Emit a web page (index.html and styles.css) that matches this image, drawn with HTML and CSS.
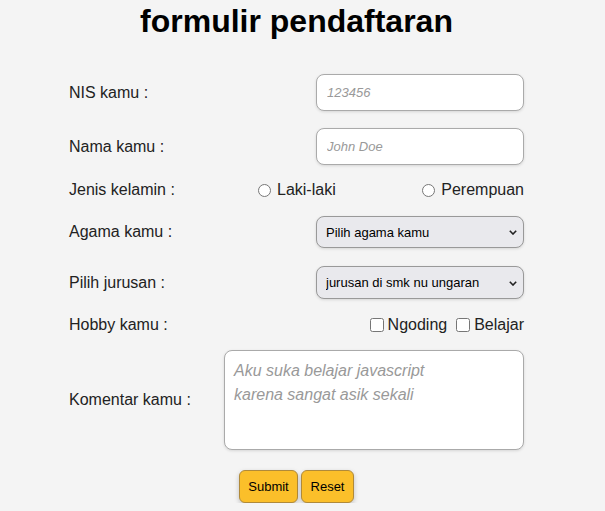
FILE: index.html
```html
<!DOCTYPE html>
<html lang="id">
<head>
<meta charset="utf-8">
<title>formulir pendaftaran</title>
<link rel="stylesheet" href="styles.css">
</head>
<body>
<div class="page">
  <h1 class="title">formulir pendaftaran</h1>
  <form class="form">
    <div class="row row-input">
      <label class="lbl" for="nis">NIS kamu :</label>
      <input class="field" id="nis" type="text" placeholder="123456">
    </div>
    <div class="row row-input row-nama">
      <label class="lbl" for="nama">Nama kamu :</label>
      <input class="field" id="nama" type="text" placeholder="John Doe">
    </div>
    <div class="row row-radio">
      <span class="lbl">Jenis kelamin :</span>
      <div class="radios">
        <label class="opt"><input class="radio" type="radio" name="jk"> Laki-laki</label>
        <label class="opt"><input class="radio" type="radio" name="jk"> Perempuan</label>
      </div>
    </div>
    <div class="row row-select">
      <label class="lbl" for="agama">Agama kamu :</label>
      <div class="sel-wrap">
        <select class="sel" id="agama">
          <option>Pilih agama kamu</option>
        </select>
        <svg class="chev" width="8" height="5" viewBox="0 0 8 5"><path d="M0.8 0.8 L4 4 L7.2 0.8" fill="none" stroke="#222" stroke-width="1.6"/></svg>
      </div>
    </div>
    <div class="row row-select2">
      <label class="lbl" for="jurusan">Pilih jurusan :</label>
      <div class="sel-wrap sel-wrap2">
        <select class="sel" id="jurusan">
          <option>jurusan di smk nu ungaran</option>
        </select>
        <svg class="chev" width="8" height="5" viewBox="0 0 8 5"><path d="M0.8 0.8 L4 4 L7.2 0.8" fill="none" stroke="#222" stroke-width="1.6"/></svg>
      </div>
    </div>
    <div class="row row-check">
      <span class="lbl">Hobby kamu :</span>
      <div class="checks">
        <label class="opt"><input class="check" type="checkbox"> Ngoding</label>
        <label class="opt"><input class="check" type="checkbox"> Belajar</label>
      </div>
    </div>
    <div class="row row-area">
      <label class="lbl" for="komentar">Komentar kamu :</label>
      <textarea class="area" id="komentar" placeholder="Aku suka belajar javascript
karena sangat asik sekali"></textarea>
    </div>
    <div class="buttons">
      <button class="btn btn-submit" type="submit">Submit</button>
      <button class="btn btn-reset" type="reset">Reset</button>
    </div>
  </form>
</div>
</body>
</html>
```
FILE: styles.css
```css
html, body {
  margin: 0;
  padding: 0;
  background: #f4f4f4;
}
body {
  font-family: "Liberation Sans", Arial, sans-serif;
  color: #222;
}
.page {
  width: 455px;
  margin-left: 69px;
  padding-top: 3px;
}
.title {
  margin: 0;
  font-size: 32px;
  font-weight: bold;
  color: #000;
  text-align: center;
  line-height: 37px;
}
.form {
  display: flex;
  flex-direction: column;
  margin-top: 34px;
}
.row {
  display: grid;
  grid-template-columns: 155px 300px;
  align-items: center;
}
.row-nama { margin-top: 17px; }
.row-radio { margin-top: 14px; height: 22px; }
.row-select { margin-top: 15px; }
.row-select2 { margin-top: 18px; }
.row-check { margin-top: 15px; height: 21px; }
.row-area { margin-top: 15px; }
.lbl {
  font-size: 16px;
  color: #222;
}
.field {
  justify-self: end;
  box-sizing: border-box;
  width: 208px;
  height: 37px;
  margin: 0;
  padding: 0 10px;
  border: 1px solid #aaa;
  border-radius: 8px;
  background: #fff;
  box-shadow: 0 1px 3px rgba(0,0,0,0.12);
  font-family: "Liberation Sans", Arial, sans-serif;
  font-size: 13px;
  outline: none;
}
.field::placeholder,
.area::placeholder {
  color: #999;
  font-style: italic;
}
.radios {
  display: flex;
  justify-content: space-between;
  padding-left: 34px;
}
.opt {
  display: inline-flex;
  align-items: center;
  font-size: 16px;
  color: #222;
}
.radio {
  margin: 0 6px 0 0;
  width: 13px;
  height: 13px;
}
.sel-wrap {
  justify-self: end;
  position: relative;
  width: 208px;
  height: 32px;
}
.sel-wrap2 { height: 33px; }
.sel {
  appearance: none;
  -webkit-appearance: none;
  box-sizing: border-box;
  width: 100%;
  height: 100%;
  margin: 0;
  padding: 0 20px 0 9px;
  border: 1px solid #999;
  border-radius: 8px;
  background-color: #e9e9ed;
  box-shadow: 0 1px 3px rgba(0,0,0,0.12);
  font-family: "Liberation Sans", Arial, sans-serif;
  font-size: 13px;
  color: #000;
}
.chev {
  position: absolute;
  right: 7px;
  top: 50%;
  margin-top: -2px;
  pointer-events: none;
}
.checks {
  display: flex;
  justify-content: flex-end;
  gap: 9px;
}
.check {
  margin: 0 4px 0 0;
  width: 14px;
  height: 14px;
}
.area {
  box-sizing: border-box;
  width: 300px;
  height: 100px;
  margin: 0;
  padding: 8px 9px;
  border: 1px solid #aaa;
  border-radius: 8px;
  background: #fff;
  box-shadow: 0 1px 3px rgba(0,0,0,0.12);
  font-family: "Liberation Sans", Arial, sans-serif;
  font-size: 16px;
  line-height: 24px;
  resize: none;
  outline: none;
}
.buttons {
  display: flex;
  justify-content: center;
  gap: 3px;
  margin-top: 20px;
}
.btn {
  box-sizing: border-box;
  height: 33px;
  margin: 0;
  border: 1px solid #b08a3a;
  border-radius: 6px;
  background: #fbbf2a;
  box-shadow: 0 2px 5px rgba(0,0,0,0.22);
  font-family: "Liberation Sans", Arial, sans-serif;
  font-size: 13px;
  color: #000;
}
.btn-submit { width: 59px; padding: 0; }
.btn-reset { width: 53px; padding: 0; }
```
